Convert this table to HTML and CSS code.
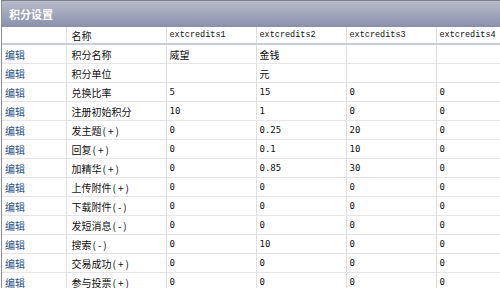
FILE: index.html
```html
<!DOCTYPE html>
<html lang="zh-CN">
<head>
    <meta charset="UTF-8">
    <title>积分设置</title>
    <link rel="stylesheet" href="styles.css">
</head>
<body>
    <div class="panel">
        <div class="panel-title">积分设置</div>
        <table class="credits">
            <colgroup>
                <col class="c-edit">
                <col class="c-name">
                <col class="c-val">
                <col class="c-val">
                <col class="c-val">
                <col>
            </colgroup>
            <thead>
                <tr>
                    <th></th>
                    <th class="name">名称</th>
                    <th class="ext">extcredits1</th>
                    <th class="ext">extcredits2</th>
                    <th class="ext">extcredits3</th>
                    <th class="ext">extcredits4</th>
                </tr>
            </thead>
            <tbody>
                <tr><td><a href="#">编辑</a></td><td class="name">积分名称</td><td>威望</td><td>金钱</td><td></td><td></td></tr>
                <tr><td><a href="#">编辑</a></td><td class="name">积分单位</td><td></td><td>元</td><td></td><td></td></tr>
                <tr><td><a href="#">编辑</a></td><td class="name">兑换比率</td><td class="num">5</td><td class="num">15</td><td class="num">0</td><td class="num">0</td></tr>
                <tr><td><a href="#">编辑</a></td><td class="name">注册初始积分</td><td class="num">10</td><td class="num">1</td><td class="num">0</td><td class="num">0</td></tr>
                <tr><td><a href="#">编辑</a></td><td class="name">发主题<span class="op">(+)</span></td><td class="num">0</td><td class="num">0.25</td><td class="num">20</td><td class="num">0</td></tr>
                <tr><td><a href="#">编辑</a></td><td class="name">回复<span class="op">(+)</span></td><td class="num">0</td><td class="num">0.1</td><td class="num">10</td><td class="num">0</td></tr>
                <tr><td><a href="#">编辑</a></td><td class="name">加精华<span class="op">(+)</span></td><td class="num">0</td><td class="num">0.85</td><td class="num">30</td><td class="num">0</td></tr>
                <tr><td><a href="#">编辑</a></td><td class="name">上传附件<span class="op">(+)</span></td><td class="num">0</td><td class="num">0</td><td class="num">0</td><td class="num">0</td></tr>
                <tr><td><a href="#">编辑</a></td><td class="name">下载附件<span class="op">(-)</span></td><td class="num">0</td><td class="num">0</td><td class="num">0</td><td class="num">0</td></tr>
                <tr><td><a href="#">编辑</a></td><td class="name">发短消息<span class="op">(-)</span></td><td class="num">0</td><td class="num">0</td><td class="num">0</td><td class="num">0</td></tr>
                <tr><td><a href="#">编辑</a></td><td class="name">搜索<span class="op">(-)</span></td><td class="num">0</td><td class="num">10</td><td class="num">0</td><td class="num">0</td></tr>
                <tr><td><a href="#">编辑</a></td><td class="name">交易成功<span class="op">(+)</span></td><td class="num">0</td><td class="num">0</td><td class="num">0</td><td class="num">0</td></tr>
                <tr><td><a href="#">编辑</a></td><td class="name">参与投票<span class="op">(+)</span></td><td class="num">0</td><td class="num">0</td><td class="num">0</td><td class="num">0</td></tr>
            </tbody>
        </table>
    </div>
</body>
</html>
```

FILE: styles.css
```css
body {
    margin: 0;
    background: #fff;
    color: #111;
    font-family: "Noto Sans CJK SC", sans-serif;
    font-size: 10px;
    overflow: hidden;
}
.panel {
    margin-left: 1px;
    border-left: 1px solid #8e8e96;
}
.panel-title {
    height: 26px;
    line-height: 26px;
    padding-left: 7px;
    border-top: 1px solid #7c7f8c;
    background: linear-gradient(#b7bbcb, #8990aa);
    color: #fff;
    font-size: 11px;
    font-weight: bold;
}
.credits {
    table-layout: fixed;
    border-collapse: collapse;
    width: 100%;
}
.c-edit { width: 64px; }
.c-name { width: 100px; }
.c-val { width: 90px; }
th, td {
    padding: 0 3px;
    text-align: left;
    white-space: nowrap;
    overflow: hidden;
    border-left: 1px solid #e0e0e0;
    border-right: 1px solid #e0e0e0;
}
th:first-child, td:first-child {
    border-left: none;
}
th:last-child, td:last-child {
    border-right: none;
}
th {
    height: 16px;
    font-weight: normal;
    border-bottom: 2px solid #c7cdda;
}
td {
    height: 18px;
    border-bottom: 1px solid #e6e6e6;
}
.name {
    padding-left: 5px;
}
.ext {
    font-family: "Liberation Mono", monospace;
    font-size: 8.5px;
}
.num {
    font-family: "DejaVu Sans Mono", monospace;
    font-size: 9px;
}
.op {
    letter-spacing: 2px;
    padding-left: 1px;
}
a {
    color: #1f4f8e;
    text-decoration: none;
}
```
